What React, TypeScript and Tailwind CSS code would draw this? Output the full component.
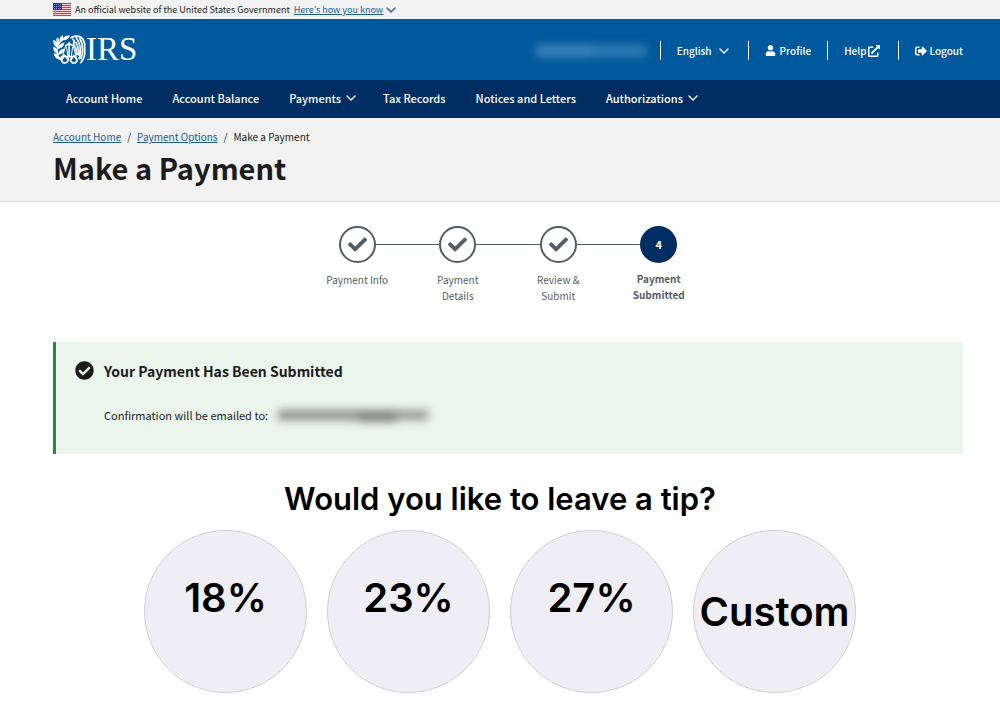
import { FaUser, FaExternalLinkAlt, FaSignOutAlt, FaCheck, FaCheckCircle } from "react-icons/fa";
import { ChevronDown } from "lucide-react";

function Flag() {
  return (
    <svg viewBox="0 0 18 13" className="h-[13px] w-[18px] shrink-0" shapeRendering="crispEdges" aria-hidden="true">
      <rect width="18" height="13" fill="#f6c9cc" />
      {[0, 2, 4, 6, 8, 10, 12].map((y) => (
        <rect key={y} y={y} width="18" height="1" fill="#db3e45" />
      ))}
      <rect width="9" height="7" fill="#1e33b1" />
      {[1, 3, 5].map((y) =>
        [1, 3, 5, 7].map((x) => <rect key={`${x}-${y}`} x={x} y={y} width="1" height="1" fill="#8291e0" />)
      )}
    </svg>
  );
}

function Emblem() {
  return (
    <svg viewBox="0 0 96 86" className="h-[29px] w-[33px]" fill="none" stroke="#fff" strokeLinecap="round" aria-hidden="true">
      <path d="M26 76C14 68 9 54 12 38C14 26 22 16 34 10" strokeWidth="4" />
      <g fill="#fff" stroke="none">
        <path d="M0 14C10 18 15 27 14 38C4 35 -1 26 0 14Z" />
        <path d="M0 35C9 37 14 45 15 56C4 54 -1 46 0 35Z" />
        <path d="M1 54C12 55 19 62 21 73C9 72 3 65 1 54Z" />
        <path d="M33 22C31 34 24 40 13 41C15 30 22 24 33 22Z" />
        <path d="M33 40C31 51 25 58 14 59C15 48 22 42 33 40Z" />
        <path d="M33 57C32 67 28 73 20 74C19 65 24 60 33 57Z" />
        <path d="M12 7C19 13 20 22 14 32C8 24 7 15 12 7Z" />
        <path d="M28 0C30 10 28 18 20 22C16 13 19 5 28 0Z" />
        <path d="M49 2C45 12 37 17 26 15C30 5 38 0 49 2Z" />
      </g>
      <path d="M47 23V64M38 31Q47 23 57 31M38 64H56" strokeWidth="5" />
      <path d="M37 31L24 74M39 36L45 74M57 36L52 74M59 31L70 74" strokeWidth="3" />
      <g fill="#00599c" strokeWidth="5">
        <path d="M24 74L34 61L45 74Q41 83 34 83Q26 83 24 74Z" />
        <path d="M51 74L61 61L71 74Q69 83 61 83Q53 83 51 74Z" />
      </g>
      <path d="M52 8Q62 1 75 4Q90 8 93 27V59Q90 74 81 82" strokeWidth="5" />
      <path d="M58 12Q65 18 60 25M68 8Q76 18 80 36Q82 54 77 70M79 11Q87 24 87 44Q87 60 82 70M61 28Q69 40 70 58M67 22Q76 38 75 58" strokeWidth="5" />
    </svg>
  );
}

const navItems = [
  { label: "Account Home" },
  { label: "Account Balance" },
  { label: "Payments", menu: true },
  { label: "Tax Records" },
  { label: "Notices and Letters" },
  { label: "Authorizations", menu: true },
];

const steps = ["Payment Info", "Payment Details", "Review & Submit", "Payment Submitted"];
const tips = ["18%", "23%", "27%"];

const tipButton =
  "flex size-[163px] shrink-0 cursor-pointer justify-center rounded-full border border-[#d0d0d4] bg-[#efeef5] text-[40px] leading-[50px] font-semibold";

export default function App() {
  return (
    <div className="min-h-screen bg-white font-['Noto_Sans_CJK_SC','Noto_Sans',sans-serif] text-[#1b1b1b]">
      <div className="flex h-[19px] items-center bg-[#f2f2f2] pr-[37px] pl-[53px] text-[9px] leading-[19px]">
        <Flag />
        <span className="ml-1">An official website of the United States Government</span>
        <button className="ml-1 flex cursor-pointer items-center text-[#205c94]">
          <span className="underline">Here's how you know</span>
          <ChevronDown className="size-4" strokeWidth={2} />
        </button>
      </div>

      <header>
        <div className="flex h-[61px] items-center justify-between bg-[#00599c] pr-[37px] pl-[53px] text-white">
          <a href="#home" className="flex items-center font-['Liberation_Serif',serif] text-[33px] leading-[33px]" aria-label="IRS">
            <Emblem />
            <span>IRS</span>
          </a>
          <div className="flex items-center pt-0.5 text-[10px] leading-[19px] font-medium">
            <span className="mr-3.5 flex h-3 w-[110px] blur-xs" aria-hidden="true">
              <span className="w-14 bg-[#3d82bb]" />
              <span className="grow bg-[#337bb5]" />
            </span>
            <button className="flex cursor-pointer items-center gap-1 border-l border-white px-4">
              English <ChevronDown className="size-4" strokeWidth={2} />
            </button>
            <a href="#profile" className="flex items-center gap-1 border-l border-white px-4">
              <FaUser className="size-[11px]" /> Profile
            </a>
            <a href="#help" className="flex items-center gap-0.5 border-l border-white pr-[18px] pl-4">
              Help <FaExternalLinkAlt className="size-3" />
            </a>
            <a href="#logout" className="flex items-center gap-0.5 border-l border-white pl-4">
              <FaSignOutAlt className="size-3" /> Logout
            </a>
          </div>
        </div>
        <nav className="flex h-[38px] items-center gap-[30px] bg-[#002d62] pb-0.5 pl-[66px] text-[11px] font-medium text-white">
          {navItems.map((item) =>
            item.menu ? (
              <button key={item.label} className="-mr-1.5 flex cursor-pointer items-center gap-0.5">
                {item.label} <ChevronDown className="size-4" strokeWidth={2} />
              </button>
            ) : (
              <a key={item.label} href="#nav">
                {item.label}
              </a>
            )
          )}
        </nav>
      </header>

      <div className="border-b border-[#d6d7d9] bg-[#f2f2f2] pt-[11px] pr-[37px] pb-3.5 pl-[53px]">
        <nav aria-label="Breadcrumb" className="flex gap-1.5 text-[10px] leading-4">
          <a href="#home" className="text-[#205c94] underline">Account Home</a>
          <span>/</span>
          <a href="#options" className="text-[#205c94] underline">Payment Options</a>
          <span>/</span>
          <span>Make a Payment</span>
        </nav>
        <h1 className="mt-[3px] text-[29px] leading-[39px] font-bold">Make a Payment</h1>
      </div>

      <main className="pr-[37px] pl-[53px]">
        <ol className="mx-auto mt-6 flex w-[402px] text-[#565c65]">
          {steps.map((step, i) => {
            const current = i === steps.length - 1;
            return (
              <li key={step} className="flex flex-1 flex-col items-center">
                <div className="flex w-full items-center">
                  <span className={i === 0 ? "h-px flex-1" : "h-px flex-1 bg-[#565c65]"} />
                  {current ? (
                    <span className="flex size-[37px] items-center justify-center rounded-full bg-[#002d62] text-[11px] font-bold text-white">4</span>
                  ) : (
                    <span className="flex size-[37px] items-center justify-center rounded-full border-2 border-[#565c65]">
                      <FaCheck className="size-[19px]" />
                    </span>
                  )}
                  <span className={current ? "h-px flex-1" : "h-px flex-1 bg-[#565c65]"} />
                </div>
                <span
                  className={
                    current
                      ? "mt-2 w-[66px] text-center text-[10px] leading-4 font-bold"
                      : "mt-[9px] w-[66px] text-center text-[10px] leading-4"
                  }
                >
                  {step}
                </span>
              </li>
            );
          })}
        </ol>

        <section className="mt-[38px] flex h-28 gap-2.5 border-l-3 border-[#2e8540] bg-[#eaf5eb] pt-[19px] pl-[19px]">
          <FaCheckCircle className="size-[19px] shrink-0" />
          <div>
            <h2 className="text-[14px] leading-5 font-bold">Your Payment Has Been Submitted</h2>
            <p className="mt-6 flex items-center text-[11px] leading-5">
              Confirmation will be emailed to:
              <span className="ml-2.5 flex h-2.5 w-[150px] blur-xs" aria-hidden="true">
                <span className="w-20 bg-[#8a908b]" />
                <span className="h-3 w-[38px] bg-[#7f8580]" />
                <span className="grow bg-[#959b96]" />
              </span>
            </p>
          </div>
        </section>
      </main>

      <section className="pb-3.5 font-['Inter',sans-serif] text-black">
        <h2 className="mt-6 text-center text-[31px] leading-[42px] font-semibold">Would you like to leave a tip?</h2>
        <div className="mt-2.5 flex justify-center gap-5">
          {tips.map((tip) => (
            <button key={tip} className={`${tipButton} items-start pt-[42px]`}>
              {tip}
            </button>
          ))}
          <button className={`${tipButton} items-center`}>Custom</button>
        </div>
      </section>
    </div>
  );
}
